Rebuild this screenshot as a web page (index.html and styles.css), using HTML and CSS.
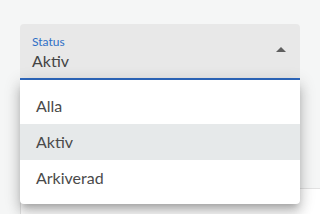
FILE: index.html
```html
<!DOCTYPE html>
<html lang="sv">
    <head>
        <meta charset="UTF-8">
        <meta name="viewport" content="width=device-width, initial-scale=1.0">
        <title>Status</title>
        <link rel="stylesheet" href="styles.css">
    </head>

    <body>

        <main class="page">

            <!-- Select -->

            <div class="select">
                <div class="select-field">
                    <div class="select-text">
                        <span class="select-label">Status</span>
                        <span class="select-value">Aktiv</span>
                    </div>
                    <svg class="select-arrow" width="10" height="5" viewBox="0 0 10 5">
                        <path d="M0 5 L5 0 L10 5 Z" fill="#5f5f5f"/>
                    </svg>
                </div>

                <!-- Meny -->

                <ul class="select-menu">
                    <li>Alla</li>
                    <li class="active">Aktiv</li>
                    <li>Arkiverad</li>
                </ul>
            </div>

            <!-- Kort under -->

            <div class="card"></div>

        </main>

    </body>

</html>
```

FILE: styles.css
```css
/* Bas */

html, body {
    margin: 0;
    padding: 0;
    height: 100%;
    overflow: hidden;
}

body {
    background: #f5f6f6;
    font-family: Lato, "Open Sans", sans-serif;
    color: #424242;
}

.page {
    padding: 24px 0 0 20px;
}

/* Select */

.select {
    position: relative;
    width: 280px;
}

.select-field {
    display: flex;
    align-items: center;
    justify-content: space-between;
    height: 54px;
    padding: 0 14px 0 12px;
    background: #e8e8e8;
    border-radius: 4px 4px 0 0;
    border-bottom: 2px solid #2f69bf;
}

.select-text {
    display: flex;
    flex-direction: column;
    padding-top: 3px;
}

.select-label {
    font-size: 12px;
    line-height: 16px;
    color: #2f6fc6;
}

.select-value {
    font-size: 16px;
    line-height: 22px;
    color: #444;
}

.select-arrow {
    display: block;
    margin-top: -4px;
}

/* Meny */

.select-menu {
    position: absolute;
    top: 56px;
    left: 0;
    right: 0;
    margin: 0;
    padding: 8px 0;
    list-style: none;
    background: #fff;
    border-radius: 0 0 4px 4px;
    box-shadow: 0 5px 6px -3px rgba(0, 0, 0, 0.2),
                0 9px 12px 1px rgba(0, 0, 0, 0.14),
                0 3px 16px 2px rgba(0, 0, 0, 0.12);
    z-index: 2;
}

.select-menu li {
    height: 36px;
    line-height: 36px;
    padding: 0 16px;
    font-size: 16px;
    color: #4a4a4a;
}

.select-menu li.active {
    background: #e6e9ea;
}

/* Kort */

.card {
    box-sizing: border-box;
    margin-top: 108px;
    width: 300px;
    height: 26px;
    background: #fff;
    border: 1px solid #e2e2e2;
    border-right: 0;
    border-bottom: 0;
}
```
